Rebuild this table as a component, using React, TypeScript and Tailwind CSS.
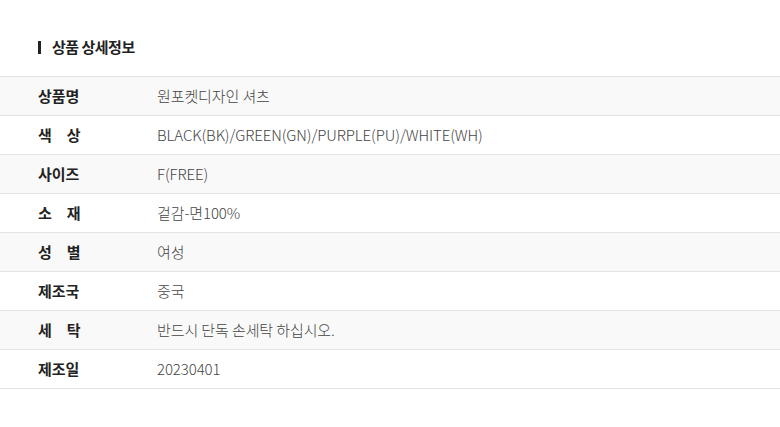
import React from "react";

const rows: [string, string][] = [
  ["상품명", "원포켓디자인 셔츠"],
  ["색　상", "BLACK(BK)/GREEN(GN)/PURPLE(PU)/WHITE(WH)"],
  ["사이즈", "F(FREE)"],
  ["소　재", "겉감-면100%"],
  ["성　별", "여성"],
  ["제조국", "중국"],
  ["세　탁", "반드시 단독 손세탁 하십시오."],
  ["제조일", "20230401"],
];

export default function App() {
  return (
    <div
      className="w-[780px] h-[427px] bg-white overflow-hidden"
      style={{ fontFamily: '"Noto Sans CJK KR", "Noto Sans", sans-serif' }}
    >
      <div className="h-[76px] flex items-center pl-[38px] pt-[18px]">
        <div className="flex items-center">
          <span className="w-[3px] h-[13px] bg-[#222] mr-[11px]"></span>
          <span className="text-[15px] font-bold text-[#222] tracking-[-0.5px]">상품 상세정보</span>
        </div>
      </div>
      <div className="border-t border-[#e3e3e3]">
        {rows.map(([k, v], i) => (
          <div
            key={i}
            className={`flex items-center h-[39px] border-b border-[#e3e3e3] ${i % 2 === 0 ? "bg-[#f9f9f9]" : "bg-white"}`}
          >
            <div className="w-[157px] pl-[38px] text-[15px] font-bold text-[#222] whitespace-pre">{k}</div>
            <div className="text-[15px] font-light text-[#444] tracking-[-0.1px]">{v}</div>
          </div>
        ))}
      </div>
    </div>
  );
}
